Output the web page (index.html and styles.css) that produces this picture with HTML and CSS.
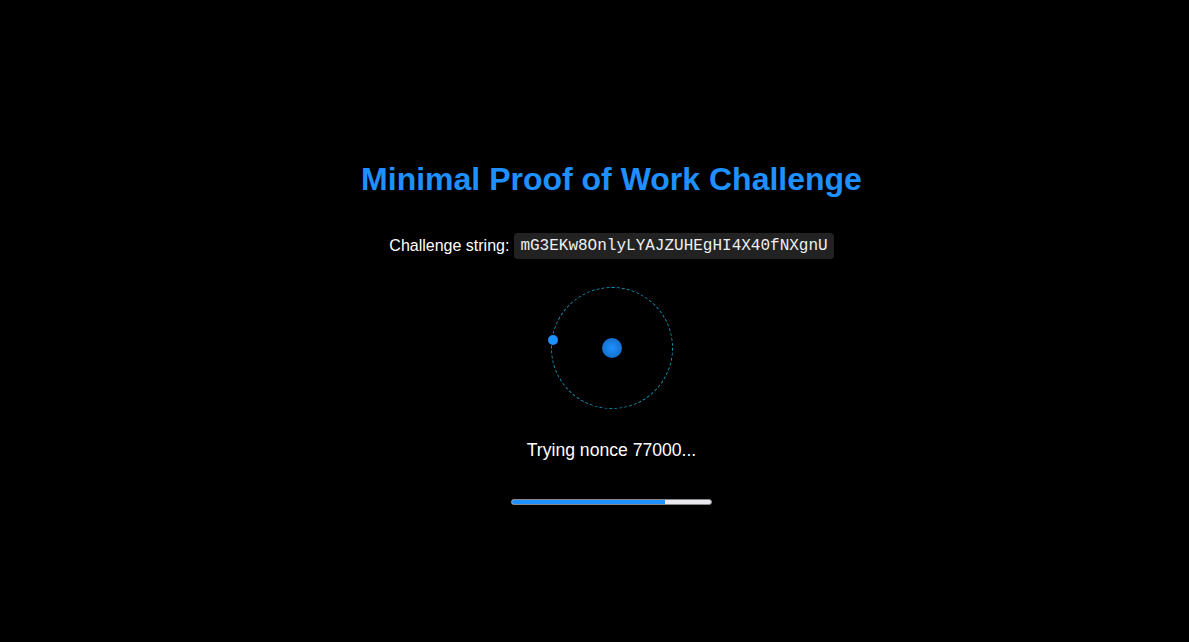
FILE: index.html
```html
<!DOCTYPE html>
<html lang="en">
<head>
<meta charset="utf-8">
<title>Minimal Proof of Work Challenge</title>
<link rel="stylesheet" href="styles.css">
</head>
<body>
<main class="page">
  <h1 class="title">Minimal Proof of Work Challenge</h1>
  <div class="challenge">
    <span class="label">Challenge string:</span>
    <code class="code">mG3EKw8OnlyLYAJZUHEgHI4X40fNXgnU</code>
  </div>
  <div class="orbit">
    <span class="planet"></span>
    <span class="core"></span>
  </div>
  <p class="status">Trying nonce 77000...</p>
  <div class="progress"><div class="progress-fill" style="width:77%"></div></div>
</main>
</body>
</html>
```

FILE: styles.css
```css
html, body {
  margin: 0;
  padding: 0;
  background: #000;
  color: #fff;
  font-family: "Liberation Sans", Arial, sans-serif;
}
.page {
  display: flex;
  flex-direction: column;
  align-items: center;
  padding-top: 161px;
  padding-left: 34px;
}
.title {
  margin: 0;
  font-size: 32px;
  line-height: 37px;
  font-weight: bold;
  color: #1e90ff;
}
.challenge {
  margin-top: 35px;
  display: flex;
  align-items: center;
  gap: 5px;
  height: 26px;
  font-size: 16px;
}
.label {
  color: #fff;
}
.code {
  font-family: "Liberation Mono", "Courier New", monospace;
  font-size: 16px;
  line-height: 18px;
  padding: 4px 6px;
  background: #222;
  border-radius: 4px;
  color: #f0f0f0;
}
.orbit {
  margin-top: 28px;
  width: 120px;
  height: 120px;
  border: 1px dashed #1390b5;
  border-radius: 50%;
  position: relative;
  display: flex;
  align-items: center;
  justify-content: center;
}
.core {
  width: 20px;
  height: 20px;
  border-radius: 50%;
  background: radial-gradient(circle at 50% 50%, #1e90ff 0%, #1676d6 60%, #0d5fb3 100%);
}
.planet {
  position: absolute;
  left: -4px;
  top: 47px;
  width: 10px;
  height: 10px;
  border-radius: 50%;
  background: #1e90ff;
}
.status {
  margin: 31px 0 0;
  font-size: 17.6px;
  line-height: 21px;
}
.progress {
  margin-top: 38px;
  width: 199px;
  height: 4px;
  border: 1px solid #8a8a90;
  border-radius: 3px;
  background: #e9e9ed;
  overflow: hidden;
}
.progress-fill {
  height: 100%;
  background: #1e90ff;
}
```
